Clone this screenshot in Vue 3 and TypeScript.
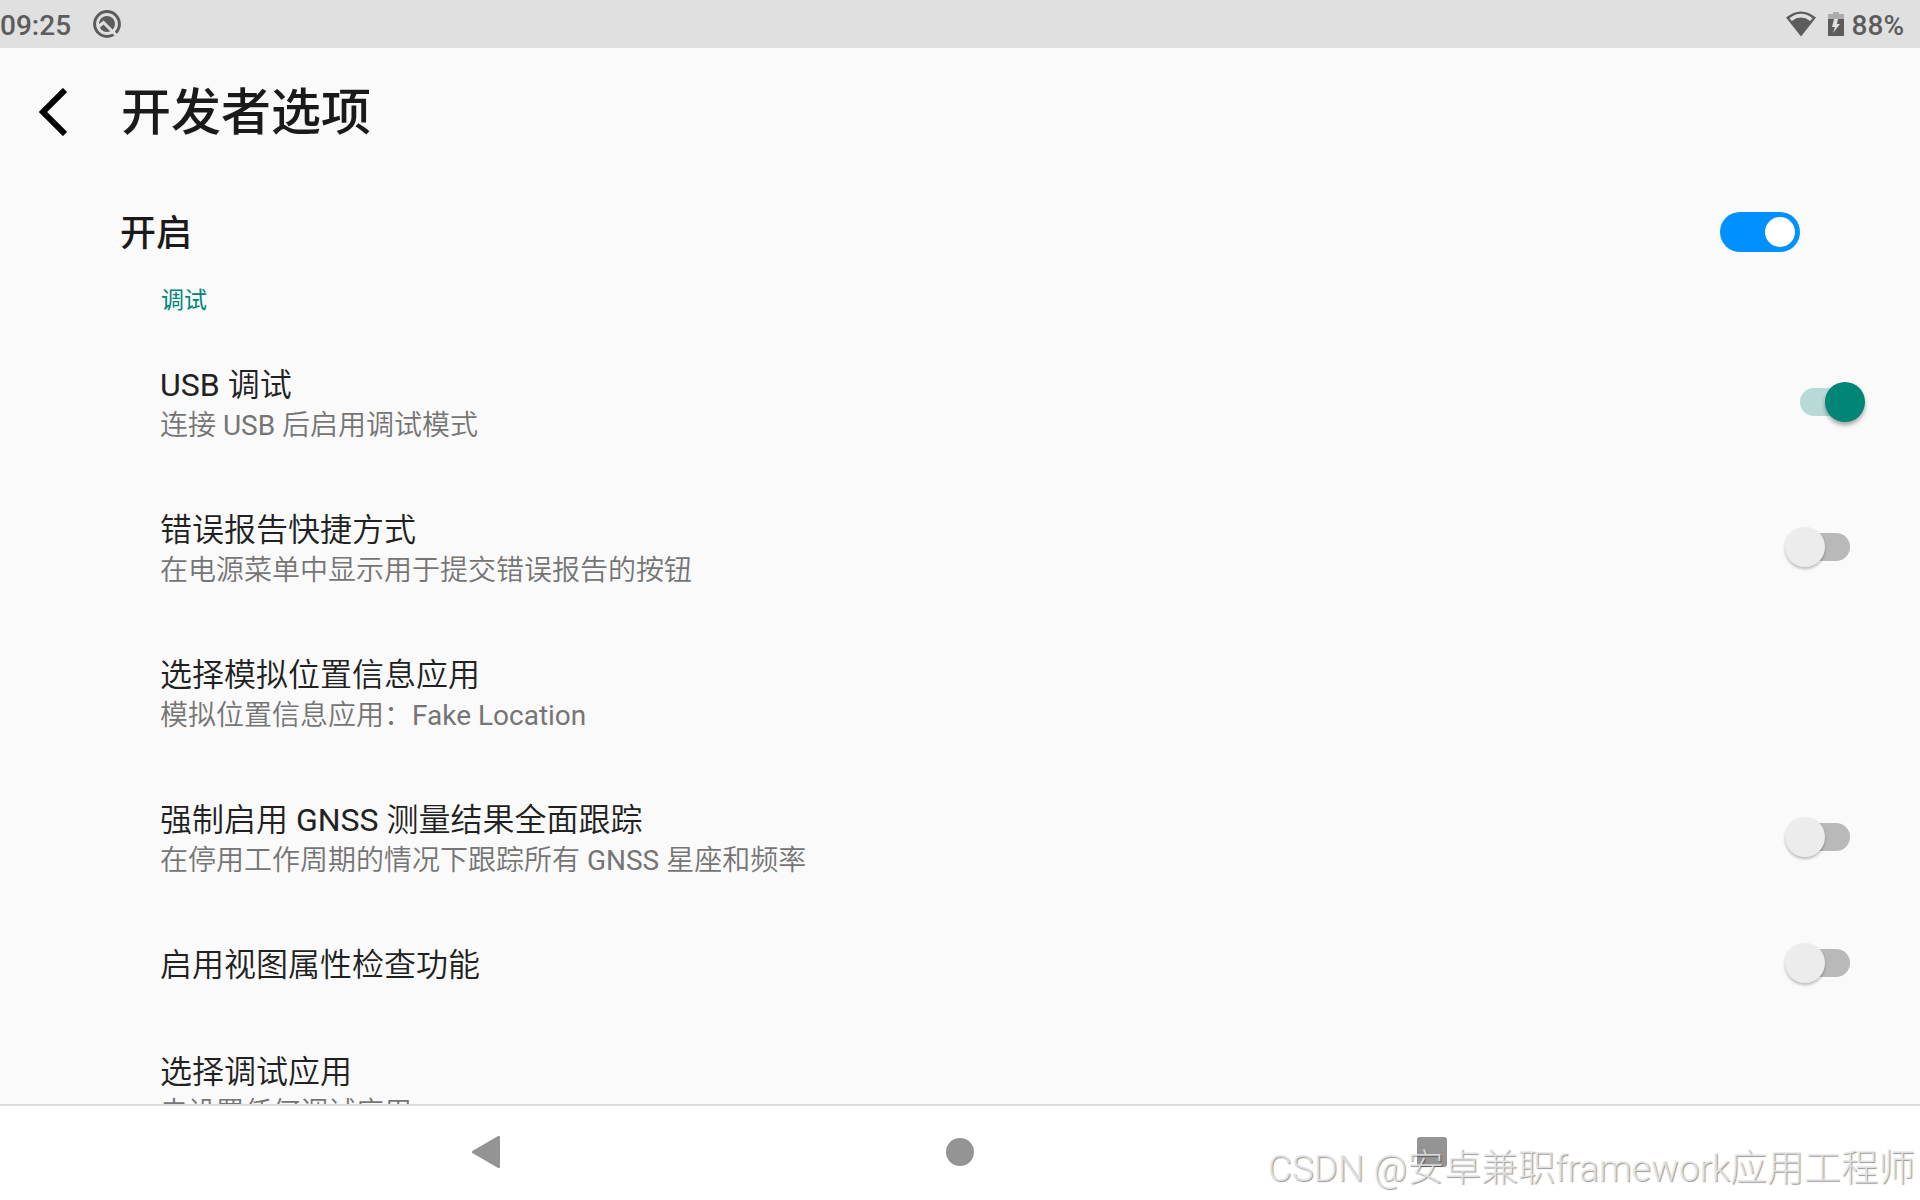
<script setup lang="ts">
import { ref } from 'vue'

interface Preference {
  id: string
  title: string
  summary?: string
  checked?: boolean
}

const enabled = ref(true)

const preferences = ref<Preference[]>([
  { id: 'usb', title: 'USB 调试', summary: '连接 USB 后启用调试模式', checked: true },
  { id: 'report', title: '错误报告快捷方式', summary: '在电源菜单中显示用于提交错误报告的按钮', checked: false },
  { id: 'mock', title: '选择模拟位置信息应用', summary: '模拟位置信息应用：Fake Location' },
  { id: 'gnss', title: '强制启用 GNSS 测量结果全面跟踪', summary: '在停用工作周期的情况下跟踪所有 GNSS 星座和频率', checked: false },
  { id: 'inspect', title: '启用视图属性检查功能', checked: false },
  { id: 'debugapp', title: '选择调试应用', summary: '未设置任何调试应用' },
])
</script>

<template>
  <div class="screen">
    <div class="status">
      <span class="label">09:25</span>
      <svg class="notice" width="28" height="28" viewBox="0 0 28 28" aria-hidden="true">
        <circle cx="14" cy="14" r="12.400" fill="none" stroke="#5c5c5c" stroke-width="3" />
        <circle cx="14" cy="14" r="8" fill="#5c5c5c" />
        <path d="M4.500 17.500L10.500 12.500L24 26" fill="none" stroke="#e0e0e0" stroke-width="3" />
      </svg>
      <span class="spacer"></span>
      <svg class="wifi" width="30" height="26" viewBox="0 0 30 26" aria-hidden="true">
        <path d="M0 6.500Q15 -5.500 30 6.500L15 25.500Z" fill="#5c5c5c" />
        <path d="M3.500 7.200Q15 -1.500 26.500 7.200L24.200 10Q15 3.200 5.800 10Z" fill="#e0e0e0" />
      </svg>
      <svg class="battery" width="16" height="24" viewBox="0 0 16 24" aria-hidden="true">
        <path d="M0 2H5V0H11V2H16V7H0Z" fill="#acacac" />
        <path d="M0 7H16V24H0Z" fill="#5c5c5c" />
        <path d="M6 7H10L9 12H12L5 21L7 15H4Z" fill="#e0e0e0" />
      </svg>
      <span class="label">88%</span>
    </div>

    <header class="header">
      <button class="back" type="button" aria-label="返回">
        <svg width="28" height="48" viewBox="0 0 28 48" aria-hidden="true">
          <path d="M26 2L4 24L26 46" fill="none" stroke="#000" stroke-width="6" />
        </svg>
      </button>
      <h1>开发者选项</h1>
    </header>

    <main class="content">
      <label class="master">
        <span>开启</span>
        <input v-model="enabled" class="pill" type="checkbox" role="switch" />
      </label>

      <section>
        <h2>调试</h2>
        <ul>
          <li v-for="item in preferences" :key="item.id">
            <label v-if="item.checked !== undefined" class="row">
              <span class="text">
                <span class="title">{{ item.title }}</span>
                <span v-if="item.summary" class="summary">{{ item.summary }}</span>
              </span>
              <input v-model="item.checked" class="switch" type="checkbox" role="switch" />
            </label>
            <button v-else class="row" type="button">
              <span class="text">
                <span class="title">{{ item.title }}</span>
                <span class="summary">{{ item.summary }}</span>
              </span>
            </button>
          </li>
        </ul>
      </section>
    </main>

    <nav class="nav">
      <button type="button" aria-label="后退">
        <svg width="32" height="32" viewBox="0 0 32 32" aria-hidden="true">
          <path d="M1.500 16L26.500 1.500V30.500Z" fill="#949494" stroke="#949494" stroke-width="3" stroke-linejoin="round" />
        </svg>
      </button>
      <button type="button" aria-label="主屏幕">
        <svg width="32" height="32" viewBox="0 0 32 32" aria-hidden="true">
          <circle cx="16" cy="16" r="14" fill="#949494" />
        </svg>
      </button>
      <button type="button" aria-label="最近任务">
        <svg width="32" height="32" viewBox="0 0 32 32" aria-hidden="true">
          <rect x="1" y="1" width="30" height="30" rx="3" fill="#949494" />
        </svg>
      </button>
    </nav>

    <div class="watermark">CSDN @安卓兼职framework应用工程师</div>
  </div>
</template>

<style>
body {
  margin: 0;
}
</style>

<style scoped>
.screen {
  position: relative;
  display: flex;
  flex-direction: column;
  height: 100vh;
  overflow: hidden;
  background: #fafafa;
  color: #212121;
  font-family: Roboto, "Noto Sans CJK SC", sans-serif;
}

button {
  padding: 0;
  border: 0;
  background: none;
  color: inherit;
  font: inherit;
  text-align: left;
}

svg {
  display: block;
}

.status {
  display: flex;
  align-items: center;
  flex: none;
  height: 48px;
  padding-right: 16px;
  background: #e0e0e0;
  color: #5c5c5c;
  font-size: 28px;
  font-weight: 500;
  line-height: 44px;
}

.label {
  padding-top: 4px;
}

.notice {
  margin-left: 22px;
}

.spacer {
  flex: 1;
}

.battery {
  margin: 0 8px 0 12px;
}

.header {
  display: flex;
  align-items: center;
  flex: none;
  height: 128px;
  padding-left: 39px;
}

.back {
  width: 82px;
}

h1 {
  margin: 0;
  padding-top: 2px;
  color: #1a1a1a;
  font-size: 50px;
  font-weight: 500;
  line-height: 64px;
}

.content {
  flex: 1;
  min-height: 0;
  overflow: hidden;
}

.master {
  display: flex;
  align-items: center;
  justify-content: space-between;
  height: 112px;
  padding: 0 120px;
  color: #1a1a1a;
  font-size: 36px;
  font-weight: 500;
}

.master span {
  padding-bottom: 4px;
}

input {
  appearance: none;
  flex: none;
  margin: 0;
}

.pill {
  display: flex;
  align-items: center;
  box-sizing: border-box;
  width: 80px;
  height: 40px;
  padding: 5px;
  border-radius: 20px;
  background: #b9b9b9;
}

.pill::before {
  content: "";
  width: 30px;
  height: 30px;
  border-radius: 50%;
  background: #fff;
}

.pill:checked {
  justify-content: flex-end;
  background: #0090ff;
}

h2 {
  margin: 0;
  padding: 1px 161px 16px;
  color: #008577;
  font-size: 23px;
  font-weight: 400;
  line-height: 24px;
}

ul {
  margin: 0;
  padding: 0;
  list-style: none;
}

.row {
  display: flex;
  align-items: center;
  justify-content: space-between;
  box-sizing: border-box;
  width: 100%;
  padding: 30px 55px 29px 160px;
}

.text {
  display: flex;
  flex-direction: column;
  padding-top: 4px;
  font-family: Roboto, "Noto Sans CJK SC DemiLight", "Noto Sans CJK SC", sans-serif;
}

.title {
  font-size: 32px;
  line-height: 44px;
}

.summary {
  color: #757575;
  font-size: 28px;
  line-height: 38px;
}

.switch {
  position: relative;
  display: flex;
  align-items: center;
  width: 80px;
  height: 40px;
}

.switch::before {
  content: "";
  width: 50px;
  height: 28px;
  margin: 0 15px;
  border-radius: 14px;
  background: #b9b9b9;
}

.switch::after {
  content: "";
  position: absolute;
  top: 0;
  left: 0;
  width: 40px;
  height: 40px;
  border-radius: 50%;
  background: #ececec;
  box-shadow: 0 2px 3px rgba(0, 0, 0, 0.25);
}

.switch:checked::before {
  background: #b8dad6;
}

.switch:checked::after {
  left: auto;
  right: 0;
  background: #008577;
  box-shadow: 0 3px 4px rgba(0, 0, 0, 0.35);
}

.nav {
  display: flex;
  align-items: center;
  justify-content: center;
  gap: 440px;
  flex: none;
  box-sizing: border-box;
  height: 96px;
  padding-bottom: 2px;
  border-top: 2px solid #dcdcdc;
  background: #fff;
}

.watermark {
  position: absolute;
  right: 5px;
  bottom: 7px;
  color: rgba(232, 232, 232, 0.85);
  font-size: 37px;
  font-weight: 300;
  line-height: 48px;
  text-shadow: 1px 1px 1px rgba(0, 0, 0, 0.4);
  white-space: nowrap;
}
</style>
